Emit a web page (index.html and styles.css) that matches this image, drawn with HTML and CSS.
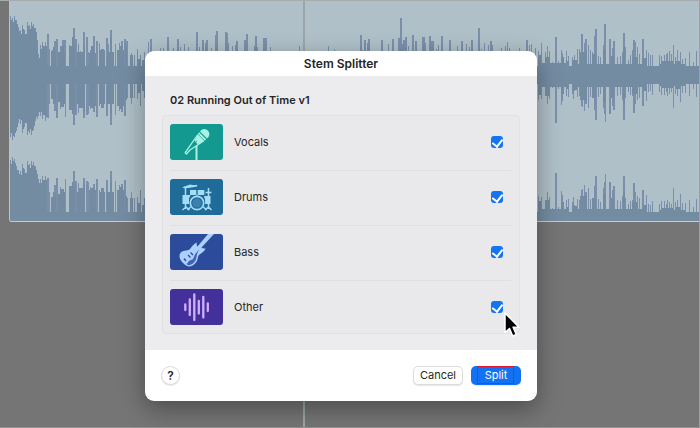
FILE: index.html
```html
<!DOCTYPE html>
<html lang="en">
<head>
  <meta charset="UTF-8" />
  <meta name="viewport" content="width=device-width, initial-scale=1.0"/>
  <title>Stem Splitter</title>
  <link rel="stylesheet" href="styles.css">
</head>
<body>
  <div class="editor">
    <div class="region">
      <svg class="wave" viewBox="0 0 700 221" preserveAspectRatio="none" aria-hidden="true">
        <path id="peaks" class="wave_peaks"/>
        <path id="body" class="wave_body"/>
      </svg>
    </div>
    <div class="playhead"></div>
  </div>

  <form class="dialog">
    <h1 class="dialog_title">Stem Splitter</h1>
    <div class="dialog_body">
      <h2 class="song">02 Running Out of Time v1</h2>
      <div class="stems">
        <div class="stem">
          <svg class="stem_icon vocals" viewBox="0 0 53 36" aria-hidden="true">
            <path d="M26.500 21V36" stroke="#a8f3e5" stroke-width="2"/>
            <path d="M27.500 11L33.500 17L20 26L16.500 30L15.200 28.700L18 24.700Z" fill="#13998f" stroke="#a8f3e5" stroke-width="1.300" stroke-linejoin="round"/>
            <path d="M27.500 11L33.500 17L28 20.500L24.500 17Z" fill="#a8f3e5"/>
            <path d="M24.800 19L27 16.800" stroke="#13998f" stroke-width="1"/>
            <path d="M30 7.400A5.100 5.100 0 1 1 37 14.500Z" fill="#a8f3e5"/>
            <path d="M28.500 9L35.500 16" stroke="#a8f3e5" stroke-width="1.800"/>
          </svg>
          <label for="vocals">Vocals</label>
          <input type="checkbox" id="vocals" checked>
        </div>
        <div class="stem">
          <svg class="stem_icon drums" viewBox="0 0 53 36" aria-hidden="true">
            <g fill="none" stroke="#a5dcf8" stroke-width="1">
              <path d="M13.500 8.500L27 6.500M20 6V8M15.500 8V30M12.500 31L16 28L19.500 31M38.500 9V30M35 31L38.500 28L41.500 31M35.500 13.500H41.500M20.500 28L17.500 31M33.500 28L36.500 31" stroke-width="1.500"/>
              <circle cx="27" cy="24" r="6.700" stroke-width="1.700"/>
              <circle cx="27" cy="24" r="4.600" fill="#3c80ad" stroke="none"/>
              <path d="M27 15.500V18"/>
            </g>
            <g fill="#a5dcf8">
              <path d="M12 8.800L16 6.900L20 5.600L24 6.200L28 7L23 8.200L17 9Z"/>
              <rect x="20" y="11" width="6.300" height="5"/>
              <rect x="27.700" y="11" width="6.600" height="5"/>
              <path d="M12.500 16H20.500L19 19.500V25H12.500Z"/>
              <path d="M34 17H40.500V25H35.200L35 20.500Z"/>
            </g>
          </svg>
          <label for="drums">Drums</label>
          <input type="checkbox" id="drums" checked>
        </div>
        <div class="stem">
          <svg class="stem_icon bass" viewBox="0 0 53 36" aria-hidden="true">
            <path d="M38 0H44L31.500 13.500C32.500 14.300 33.800 14.800 35.500 14.200C34.500 18 31 19 29 21C27.500 22.500 28.500 25 26 28.500C23 32 19.500 33.500 16.500 31.800C14 30 9.500 26.500 9.500 22C9.500 17.500 14 16.500 17.500 16.200C20 16 20.500 14.500 21.500 13C23 10.500 25.500 10 26.300 8.300C27 10.500 26.500 12 27.500 12.500Z" fill="#acd0ff"/>
            <path d="M29.500 15.500C27.500 18.500 27 20 26.500 23C26 27 23.500 30 20 31C18 31.500 17 31 16.500 29.800C18 29.300 18.200 27.500 19.200 26.800C20.500 26 22.800 26 23.500 24C24.300 22 24.700 19.500 29.500 15.500Z" fill="#3f66b5"/>
            <path d="M20.500 18.500L23 21M18 21L20.500 23.500M14 24.500L16 27" stroke="#2d4b9b" stroke-width="1.300"/>
          </svg>
          <label for="bass">Bass</label>
          <input type="checkbox" id="bass" checked>
        </div>
        <div class="stem">
          <svg class="stem_icon other" viewBox="0 0 53 36" aria-hidden="true">
            <path d="M15.300 15.500V21M19.800 10.500V26M24.300 5.500V31M28.800 12V24.500M33.300 8V28.500M37.800 14.500V22" stroke="#d1afff" stroke-width="2.300" stroke-linecap="round"/>
          </svg>
          <label for="other">Other</label>
          <input type="checkbox" id="other" checked>
        </div>
      </div>
    </div>
    <div class="dialog_footer">
      <button type="button" class="help">?</button>
      <button type="button" class="btn">Cancel</button>
      <button type="button" class="btn primary">Split</button>
    </div>
    <svg class="cursor" viewBox="0 0 18 28" aria-hidden="true">
      <path d="M2 2V21.500L6.500 17.500L9.700 25L13.300 23.500L10.100 16.200H16Z" fill="#000" stroke="#fff" stroke-width="1.500" stroke-linejoin="round"/>
    </svg>
  </form>

  <script>
    // [x, height of upper peak, height of lower peak]
    const peaks = [
      [47, 32, 34], [49, 17, 20], [52, 16, 15], [54, 25, 27], [56, 27, 34], [58, 12, 10],
      [60, 20, 25], [62, 26, 23], [64, 26, 20], [65, 16, 33], [69, 21, 19], [72, 29, 30],
      [73, 38, 41], [75, 27, 31], [78, 22, 29], [80, 15, 20], [83, 34, 34], [86, 29, 31],
      [88, 14, 30], [90, 16, 25], [93, 30, 28], [96, 25, 33], [99, 23, 22], [101, 17, 24],
      [106, 28, 32], [108, 22, 20], [110, 36, 41], [115, 22, 31], [117, 16, 22],
      [119, 23, 27], [121, 25, 28], [124, 27, 32], [126, 25, 14], [131, 13, 20],
      [134, 11, 14], [137, 17, 15], [140, 11, 22], [144, 14, 14],
      [148, 24, 20], [150, 27, 20], [160, 18, 15], [163, 18, 15], [167, 29, 20], [173, 18, 10],
      [177, 27, 20], [180, 19, 12], [184, 22, 20], [188, 19, 12], [196, 34, 20], [199, 19, 10],
      [202, 26, 20], [205, 23, 20], [206, 26, 20], [211, 18, 10], [215, 31, 20], [216, 35, 20],
      [225, 34, 20], [226, 33, 20], [228, 23, 20], [232, 20, 20], [235, 21, 10], [236, 25, 20],
      [244, 26, 20], [246, 32, 20], [254, 20, 20], [255, 30, 20], [257, 19, 10], [263, 28, 20],
      [265, 28, 20], [270, 19, 10], [299, 20, 10], [328, 20, 10], [334, 17, 10],
      [360, 31, 20], [362, 16, 10], [364, 26, 20], [367, 23, 20], [368, 27, 20], [381, 26, 20],
      [388, 22, 20], [392, 27, 20], [398, 28, 20], [400, 48, 40], [402, 22, 20], [403, 26, 20],
      [405, 29, 20], [408, 20, 10], [412, 31, 20], [413, 22, 10], [415, 25, 20], [422, 29, 20],
      [423, 29, 20], [425, 23, 20], [429, 30, 20], [430, 25, 20], [432, 25, 20], [436, 17, 10],
      [438, 21, 10], [441, 30, 20], [449, 26, 20], [457, 20, 10], [461, 25, 20], [462, 21, 10],
      [466, 22, 20], [469, 19, 10], [471, 26, 20], [478, 38, 30], [481, 17, 10], [484, 23, 20],
      [488, 21, 10], [490, 25, 20], [492, 21, 10], [501, 18, 10], [505, 20, 10], [507, 24, 20],
      [509, 18, 10], [519, 18, 10], [526, 26, 20], [529, 21, 20], [531, 22, 20], [535, 18, 20],
      [538, 15, 16], [541, 23, 15], [545, 14, 10], [547, 20, 20], [549, 15, 15], [552, 4, 4],
      [555, 29, 39], [556, 12, 10], [558, 5, 5], [561, 16, 21], [562, 13, 17], [566, 15, 12],
      [568, 10, 13], [572, 9, 10], [573, 6, 15], [574, 11, 7], [577, 17, 13], [579, 17, 12],
      [581, 32, 22], [582, 17, 23], [584, 23, 27], [585, 27, 20], [588, 21, 24], [590, 16, 13],
      [592, 14, 8], [594, 30, 26], [595, 37, 36], [598, 10, 13], [600, 9, 10], [603, 21, 24],
      [604, 42, 30], [605, 20, 38], [609, 27, 30], [610, 14, 12], [612, 18, 22], [613, 25, 26],
      [617, 9, 12], [620, 10, 11], [622, 14, 16], [623, 33, 36], [625, 19, 14], [628, 6, 8],
      [630, 11, 11], [632, 16, 12], [633, 26, 29], [635, 24, 20], [637, 19, 16], [639, 12, 14],
      [642, 27, 22], [643, 16, 22], [646, 16, 17], [648, 13, 8], [650, 11, 7], [652, 11, 11],
      [659, 11, 8], [661, 10, 11], [664, 11, 11], [666, 12, 8], [667, 13, 12], [669, 15, 10],
      [671, 12, 8], [673, 21, 24], [675, 9, 10], [677, 16, 12], [680, 14, 18], [682, 7, 9],
      [685, 8, 9], [689, 14, 12], [693, 4, 5], [696, 15, 13], [699, 9, 12]
    ];

    // loud intro: x, top of upper channel, its bottom, top of lower channel
    const intro = [
      [10, 20, 133, 164], [12, 22, 136, 161], [14, 20, 133, 163], [16, 24, 127, 170],
      [18, 31, 119, 174], [20, 34, 120, 175], [22, 29, 129, 168], [24, 34, 123, 173],
      [27, 26, 131, 165], [29, 29, 129, 168], [31, 26, 131, 165], [33, 28, 126, 166],
      [35, 32, 117, 170], [37, 44, 115, 178], [38, 58, 112, 183], [40, 49, 112, 183],
      [42, 46, 115, 180], [45, 46, 117, 180], [47, 46, 84, 212]
    ];

    // dense blocks: x, width, upper height, lower height
    const blocks = [
      [51, 5, 15, 15], [53, 2, 19, 20], [58, 7, 14, 18], [61, 3, 20, 23], [69, 6, 20, 26],
      [72, 2, 29, 30], [77, 6, 14, 20], [79, 5, 12, 24], [83, 2, 20, 28], [89, 7, 13, 22],
      [91, 3, 20, 24], [99, 6, 16, 20], [101, 3, 17, 24], [107, 7, 14, 20], [110, 2, 27, 30],
      [117, 7, 16, 22], [120, 3, 20, 25], [125, 2, 20, 16], [130, 3, 11, 14], [137, 4, 7, 9],
      [142, 3, 6, 7], [538, 3, 11, 11], [545, 5, 9, 12], [561, 3, 9, 10], [566, 3, 5, 5],
      [572, 5, 6, 6], [580, 7, 14, 16], [592, 4, 12, 14], [603, 3, 16, 18], [611, 3, 10, 14],
      [623, 2, 20, 22], [632, 6, 9, 10], [642, 5, 8, 7], [662, 11, 5, 4], [676, 5, 5, 5],
      [538, 30, 3, 3], [572, 75, 2, 3], [659, 26, 2, 2]
    ];

    let thin = "";
    peaks.forEach(([x, up, down]) => {
      const w = up > 24 ? 2 : 1;
      thin += `M${x} ${66 - up}h${w}V66h-${w}zM${x} 84h${w}v${down}h-${w}zM${x} ${212 - down}h${w}V212h-${w}z`;
    });

    let solid = "M10 66H700V84H10zM10 212H700V221H10z";
    intro.slice(0, -1).forEach(([x, top, bottom, low], i) => {
      const w = intro[i + 1][0] - x;
      solid += `M${x} ${top}h${w}V${bottom}h-${w}zM${x} ${low}h${w}V221h-${w}z`;
      thin += `M${x} ${top - 4}h1V${bottom + 4}h-1zM${x} ${low - 4}h1V221h-1z`;
    });
    blocks.forEach(([x, w, up, down]) => {
      solid += `M${x} ${66 - up}h${w}V66h-${w}zM${x} 84h${w}v${down}h-${w}zM${x} ${212 - down}h${w}V212h-${w}z`;
    });

    document.getElementById("peaks").setAttribute("d", thin);
    document.getElementById("body").setAttribute("d", solid);
  </script>
</body>
</html>
```

FILE: styles.css
```css
* {
  box-sizing: border-box;
}

body {
  margin: 0;
  min-height: 100vh;
  background-color: #757575;
  font-family: Inter, "Liberation Sans", sans-serif;
  font-size: 11px;
  color: #262626;
  overflow: hidden;
}

.editor {
  position: relative;
  min-height: 100vh;
  padding-left: 9px;
  border-top: 1px solid #a6abad;
  border-right: 1px solid #a0a0a0;
  border-bottom: 1px solid #929292;
}

.region {
  height: 221px;
  background-color: #b0c0c8;
  border-left: 1px solid #b6c4d0;
  border-bottom: 1px solid #c0cedb;
  border-radius: 0 0 0 3px;
  overflow: hidden;
}

.wave {
  display: block;
  width: calc(100% + 11px);
  height: 221px;
  margin-left: -10px;
  margin-top: -1px;
}

.wave_body {
  fill: #748ca2;
}

.wave_peaks {
  fill: #7b8fab;
}

.playhead {
  position: absolute;
  top: 0;
  bottom: 0;
  left: 303px;
  width: 2px;
  background-color: #9aa5a7;
}

.dialog {
  position: absolute;
  top: 51px;
  left: 145px;
  width: 392px;
  background-color: #fff;
  border-radius: 9px;
  box-shadow: 0 8px 24px rgba(0, 0, 0, 0.35);
}

.dialog_title {
  margin: 0;
  font-size: 12px;
  font-weight: 600;
  line-height: 25px;
  text-align: center;
}

.dialog_body {
  padding: 16px 17px;
  background-color: #ececee;
}

.song {
  margin: 0 0 6px;
  padding-left: 8px;
  font-size: 11px;
  font-weight: 600;
  line-height: 17px;
}

.stems {
  padding: 0 8px 0 7px;
  background-color: #e9e9eb;
  border: 1px solid #e2e2e4;
  border-radius: 4px;
}

.stem {
  display: flex;
  align-items: center;
  gap: 11px;
  padding: 8px 8px 10px 0;
  border-bottom: 1px solid #dfdfe2;
}

.stem:last-child {
  border-bottom: none;
  padding-bottom: 8px;
}

.stem label {
  flex: 1;
}

.stem_icon {
  width: 53px;
  height: 36px;
  border-radius: 3px;
}

.vocals {
  background-color: #13998f;
}

.drums {
  background-color: #1f6c98;
}

.bass {
  background-color: #2d4b9b;
}

.other {
  background-color: #43309a;
}

.stem input {
  appearance: none;
  display: flex;
  align-items: flex-start;
  justify-content: center;
  width: 12px;
  height: 12px;
  margin: 0;
  padding-top: 1px;
  border-radius: 3px;
  background-color: #1474f2;
}

.stem input:checked::before {
  content: "";
  width: 5px;
  height: 8px;
  border: solid #fff;
  border-width: 0 2px 2px 0;
  transform: rotate(38deg);
}

.dialog_footer {
  display: flex;
  align-items: center;
  gap: 8px;
  padding: 16px;
}

.dialog_footer button {
  height: 19px;
  padding: 0;
  border: 1px solid #dcdcdc;
  border-radius: 5px;
  background-color: #fff;
  box-shadow: 0 1px 1px rgba(0, 0, 0, 0.1);
  font-family: inherit;
  font-size: 11px;
  line-height: 17px;
  color: #262626;
}

.dialog_footer .help {
  width: 19px;
  margin-right: auto;
  border-radius: 50%;
  font-size: 12px;
  font-weight: 600;
}

.dialog_footer .btn {
  width: 50px;
}

.dialog_footer .primary {
  position: relative;
  border: none;
  background-color: #1372f3;
  color: #fff;
}

/* red marker around the button text */
.primary::after {
  content: "";
  position: absolute;
  inset: 0 7px 1px 6px;
  border: 1px solid #e0162b;
}

.cursor {
  position: absolute;
  top: 260px;
  left: 358px;
  width: 18px;
  height: 28px;
}
```
